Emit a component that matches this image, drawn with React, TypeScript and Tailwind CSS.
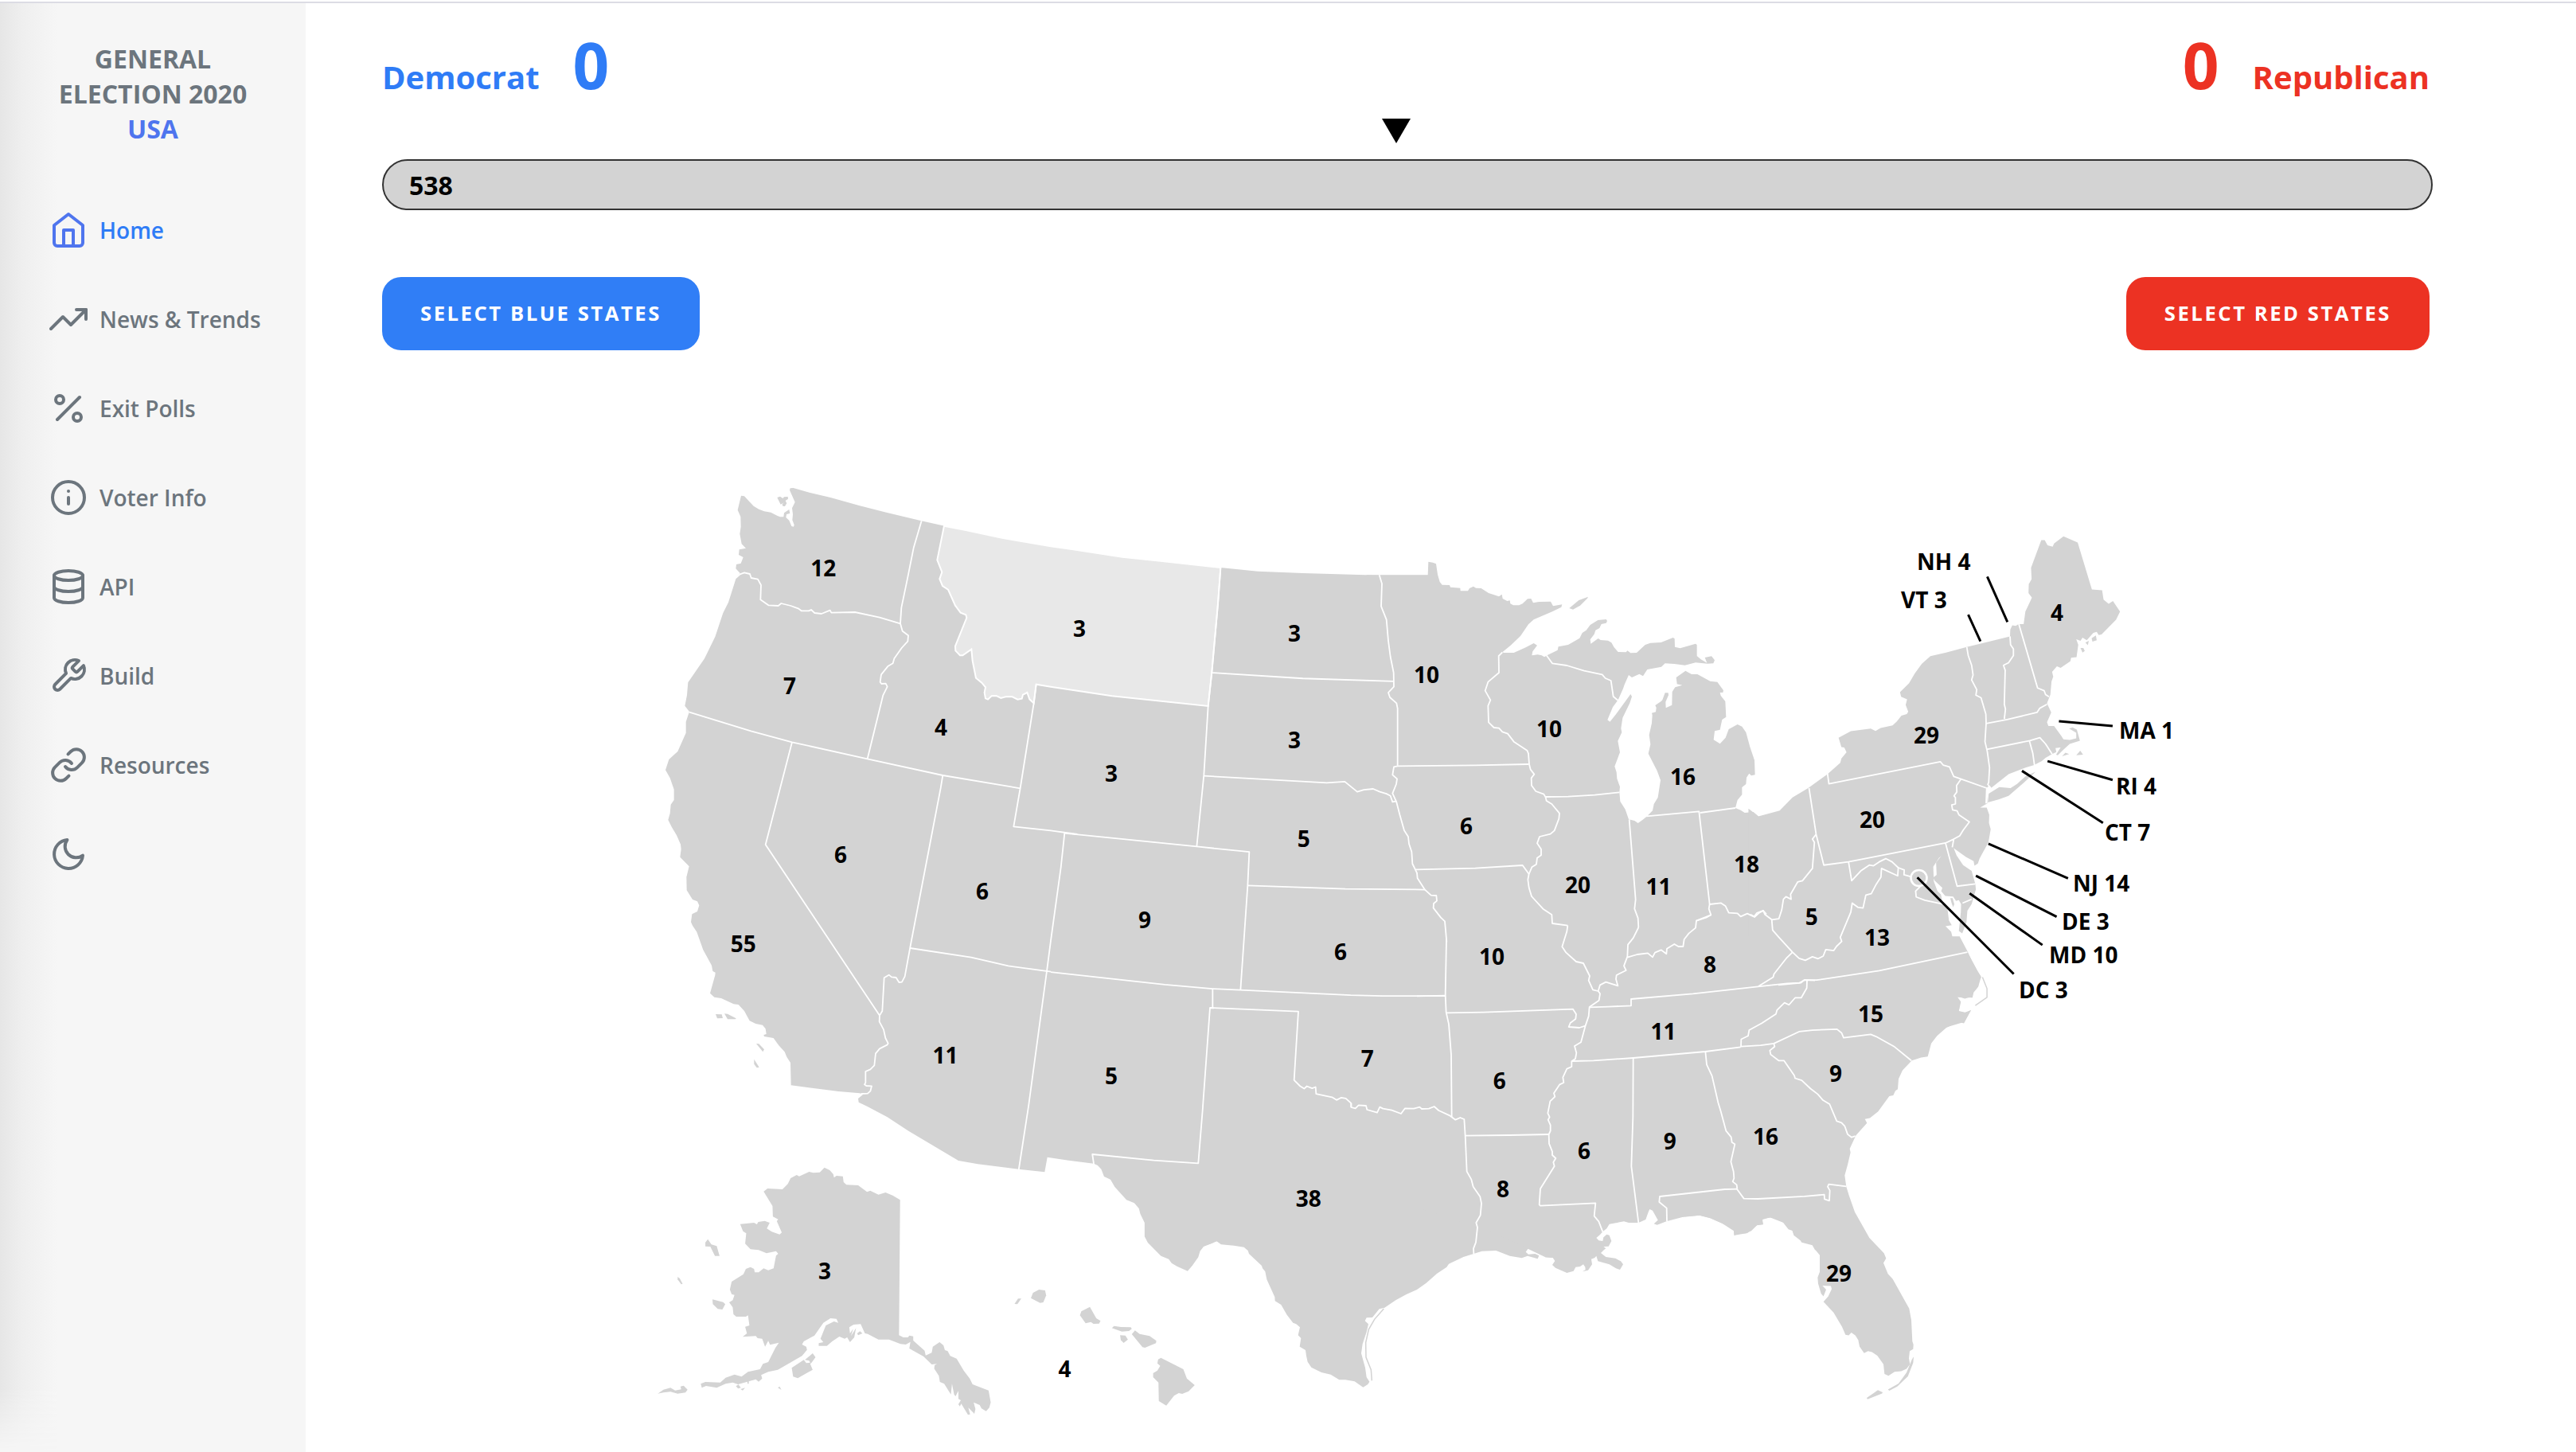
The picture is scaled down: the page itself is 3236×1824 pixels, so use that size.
import React from "react";
import { FiHome, FiTrendingUp, FiPercent, FiInfo, FiDatabase, FiTool, FiLink, FiMoon } from "react-icons/fi";
import type { IconType } from "react-icons";

const NAV: { label: string; icon: IconType; active?: boolean }[] = [
  { label: "Home", icon: FiHome, active: true },
  { label: "News & Trends", icon: FiTrendingUp },
  { label: "Exit Polls", icon: FiPercent },
  { label: "Voter Info", icon: FiInfo },
  { label: "API", icon: FiDatabase },
  { label: "Build", icon: FiTool },
  { label: "Resources", icon: FiLink },
  { label: "", icon: FiMoon },
];

// The map is drawn as overlapping sheets, each with its own coordinate scale.
const SHEET = {
  west: "translate(820 590) scale(0.333333)",
  pacific: "translate(820 1390) scale(0.446429 0.333333)",
  plains: "translate(1320 590) scale(0.333333 0.510204)",
  gulf: "translate(1520 1390) scale(0.333333)",
  lakes: "translate(1720 690) scale(0.333333)",
  northeast: "translate(2200 650) scale(0.357143 0.408163)",
  south: "translate(1780 1150) scale(0.333333)",
  southeast: "translate(2120 1180) scale(0.333333 0.382653)",
};
type SheetName = keyof typeof SHEET;

const LAND: [SheetName, string[]][] = [
  [
    "west",
    [
      "M333,98 345,100 380,137 400,149 420,157 445,161 470,174 480,178 493,178 495,163 514,150 517,165 504,168 502,180 514,191 523,213 531,215 533,208 526,190 528,168 525,145 536,122 516,77 518,70 530,69 590,86 670,105 780,136 880,161 1012,193 1100,212 1180,228 1320,258 1500,289 1580,300 1770,329 1900,343 2140,369 2280,383 2450,390 2738,398 2921,398 2921,2500 1662,2615 1567,2603 1487,2591 1477,2647 1379,2636 1225,2617 1152,2604 964,2492 884,2440 809,2400 776,2384 774,2370 793,2354 780,2350 700,2343 600,2330 521,2320 519,2235 505,2213 497,2194 475,2170 455,2142 420,2136 418,2130 428,2127 425,2107 414,2093 388,2088 365,2077 345,2040 323,2016 305,2014 258,1992 232,1988 216,1973 235,1905 236,1895 226,1890 222,1868 190,1810 166,1742 150,1718 144,1705 148,1675 168,1665 175,1642 168,1627 150,1620 128,1585 127,1535 137,1495 103,1460 107,1430 105,1412 90,1378 72,1348 58,1320 65,1295 68,1262 80,1245 80,1205 65,1162 48,1132 61,1092 74,1080 94,1062 125,992 125,950 135,920 138,912 121,890 129,850 133,802 195,712 235,630 265,540 285,500 315,406 329,390 313,373 315,357 332,353 341,330 324,321 326,301 351,296 335,280 328,242 332,215 331,177 320,152Z",
      "M469,105 480,101 490,108 495,103 509,102 510,110 500,117 505,127 498,138 490,137 488,130 495,124 482,131Z",
      "M237,2052 260,2053 264,2067 243,2068Z",
      "M270,2050 282,2051 314,2068 312,2071 282,2071Z",
      "M390,2163 400,2164 420,2185 415,2194Z",
      "M382,2222 401,2252 392,2254 382,2240Z",
    ],
  ],
  [
    "pacific",
    [
      "M1241,180 1241,215 1252,222 1262,236 1270,264 1288,275 1300,303 1333,352 1355,364 1368,384 1372,405 1384,438 1384,490 1393,513 1430,563 1452,575 1460,590 1475,602 1505,620 1518,600 1535,568 1540,545 1550,528 1568,518 1600,500 1600,0 1241,0Z",
      "M483,230 498,240 508,255 510,268 517,261 535,263 537,285 545,295 578,297 603,322 612,317 635,332 655,324 675,335 696,352 693,862 705,870 718,870 722,863 733,866 733,882 765,920 768,938 785,928 788,905 807,888 818,900 822,918 830,922 837,940 855,950 875,995 892,1025 900,1047 945,1070 951,1115 947,1135 938,1148 925,1138 920,1125 903,1115 908,1140 905,1158 888,1135 893,1160 887,1162 868,1120 864,1130 860,1122 867,1107 860,1102 860,1072 852,1092 848,1085 842,1045 839,1085 820,1045 808,1038 805,1015 792,988 793,975 800,970 785,972 762,942 722,912 725,887 712,897 697,895 665,878 635,878 605,857 597,855 585,820 565,822 553,832 555,855 564,838 558,865 572,835 567,870 555,888 547,870 540,875 525,867 505,885 490,902 467,902 467,892 480,888 472,875 487,825 510,810 522,815 517,800 500,798 480,815 455,863 425,885 420,897 432,905 434,917 420,940 352,992 325,1000 305,1012 308,1025 298,1037 290,1028 240,1047 225,1040 205,1045 180,1060 150,1053 138,1060 135,1045 148,1038 190,1040 205,1022 230,1010 250,1018 268,1000 302,990 310,970 325,963 345,910 355,890 330,898 325,883 316,905 308,875 295,873 290,865 253,868 265,855 260,830 272,825 268,787 262,792 235,792 227,783 225,757 215,738 225,730 230,710 222,707 217,690 222,660 255,632 262,612 275,605 285,612 287,625 298,625 312,610 325,617 340,610 347,562 353,555 347,545 320,553 298,541 275,538 260,517 263,478 254,470 246,443 285,438 293,444 297,435 315,431 329,438 321,460 335,472 357,482 363,475 349,432 353,425 338,415 337,375 312,320 323,309 365,312 380,292 388,270 405,258 412,263 440,246 452,250 470,248Z",
      "M450,930 458,945 447,965 443,970 450,992 408,1024 395,1018 391,985 425,955 432,967 443,965 440,958 428,955Z",
      "M155,500 165,520 180,526 188,563 175,563 162,528 148,527 148,512Z",
      "M70,642 76,648 84,668 80,670 70,652Z",
      "M168,727 198,737 204,745 196,765 183,763 169,745Z",
      "M14,1082 30,1067 50,1060 63,1070 80,1066 78,1055 87,1052 98,1067 92,1078 70,1082 50,1075 30,1078Z",
      "M234,1054 241,1048 248,1060 240,1063Z",
      "M247,1065 260,1060 253,1070Z",
      "M265,1030 270,1030 270,1045 267,1045Z",
      "M352,1060 357,1055 362,1068Z",
      "M575,855 583,847 590,855 578,862Z",
      "M1018,744 1028,724 1037,724 1026,745Z",
      "M1070,702 1087,690 1104,693 1107,712 1099,738 1090,740 1064,722Z",
      "M1206,772 1230,755 1248,798 1260,808 1256,818 1240,819 1233,812 1218,817 1202,787Z",
      "M1292,835 1298,827 1318,831 1345,832 1348,838 1340,846 1320,848Z",
      "M1315,862 1330,863 1337,878 1325,891 1317,880Z",
      "M1348,858 1357,844 1370,857 1398,865 1417,883 1416,892 1385,909 1378,907Z",
      "M1422,953 1430,947 1493,990 1503,1025 1525,1050 1508,1073 1490,1083 1480,1080 1467,1090 1445,1127 1424,1110 1423,1040 1408,1020 1408,1005 1420,995 1428,977 1420,968Z",
    ],
  ],
  [
    "gulf",
    [
      "M-20,-10 -20,524 0,518 25,508 42,520 90,524 128,530 143,543 147,555 195,600 198,610 208,622 214,652 244,718 245,733 268,747 290,785 313,815 325,820 339,832 332,862 343,873 338,905 360,918 363,940 368,962 382,983 420,1002 455,1010 487,1030 510,1030 545,1036 577,1058 595,1047 601,1037 590,1020 585,985 570,930 575,895 590,850 597,820 584,808 590,796 612,795 638,763 658,758 700,730 740,708 780,690 815,665 855,630 892,605 900,593 955,567 1025,545 1078,543 1130,563 1175,571 1197,563 1235,574 1240,562 1225,555 1200,557 1190,548 1198,537 1210,535 1218,542 1238,537 1253,542 1264,568 1292,570 1292,-10Z",
    ],
  ],
  [
    "south",
    [
      "M0,-20 1510,-20 1510,1265 1500,1260 1490,1243 1450,1232 1445,1225 1420,1205 1415,1188 1400,1183 1380,1157 1330,1138 1300,1147 1305,1165 1280,1168 1245,1197 1197,1205 1193,1185 1160,1165 1105,1140 1065,1130 1000,1137 940,1153 905,1166 893,1162 908,1148 888,1112 877,1107 873,1115 862,1146 835,1158 798,1158 780,1153 725,1163 715,1180 700,1192 690,1203 676,1215 685,1225 700,1227 703,1213 715,1202 725,1205 733,1227 722,1247 703,1248 712,1255 705,1260 693,1272 712,1287 748,1292 768,1303 777,1315 765,1335 750,1330 725,1315 682,1303 676,1283 670,1290 657,1295 660,1315 645,1337 624,1342 635,1335 634,1325 627,1315 615,1323 598,1325 590,1340 565,1347 522,1328 510,1317 520,1302 512,1290 484,1288 300,1200 0,1100Z",
    ],
  ],
  [
    "lakes",
    [
      "M-10,97 221,97 223,47 240,50 252,55 258,95 266,123 275,134 303,135 306,143 343,146 344,157 372,157 378,147 393,140 402,146 422,147 450,165 489,178 500,170 503,186 520,195 530,193 532,205 543,211 565,211 578,205 597,187 610,186 618,202 640,198 684,197 693,214 727,208 724,218 690,235 620,265 600,283 570,327 533,362 502,388 508,390 545,390 590,370 620,354 633,362 616,385 613,400 635,397 650,400 660,406 670,400 710,380 713,367 750,360 793,335 803,315 818,305 833,285 862,267 893,264 897,270 893,278 875,282 868,297 853,305 848,320 833,340 835,356 863,336 872,342 900,344 913,352 922,368 938,387 968,388 973,382 985,391 1008,390 1040,360 1060,353 1100,351 1145,333 1151,337 1152,368 1172,373 1230,356 1235,360 1235,402 1250,415 1273,428 1265,408 1290,403 1302,418 1297,430 1275,431 1230,427 1190,437 1150,432 1115,430 1101,443 1048,453 1032,478 1018,470 990,483 978,474 962,510 957,525 938,568 918,595 898,643 907,650 930,622 985,546 990,555 982,580 955,635 949,675 952,690 937,722 945,765 925,818 932,840 934,865 945,895 943,915 946,950 965,980 978,1018 1000,1023 1013,1032 1030,1020 1045,1008 1068,985 1073,960 1088,935 1098,870 1085,835 1052,770 1060,735 1055,700 1065,655 1067,625 1065,617 1080,613 1082,597 1078,588 1100,573 1105,568 1115,541 1127,541 1128,550 1117,575 1118,598 1141,587 1142,537 1153,520 1180,512 1160,508 1157,483 1192,458 1215,471 1237,471 1285,497 1312,500 1335,532 1333,540 1322,540 1325,552 1342,573 1345,632 1330,642 1325,665 1322,680 1302,685 1298,718 1322,733 1343,710 1355,678 1388,660 1405,668 1420,690 1435,745 1452,795 1454,850 1440,853 1432,845 1422,860 1420,885 1405,897 1405,925 1388,945 1380,975 1400,983 1415,993 1448,990 1468,1008 1515,997 1515,1500 -10,1500Z",
      "M754,222 790,192 825,179 822,185 795,212 768,227Z",
    ],
  ],
  [
    "northeast",
    [
      "M-10,896 25,920 100,902 145,862 200,833 268,790 313,755 317,742 335,723 327,708 317,707 307,678 350,658 420,650 437,657 455,648 497,640 512,628 528,610 547,605 552,598 543,577 548,560 527,552 523,538 555,510 575,480 600,450 630,427 685,416 758,399 910,366 911,345 918,332 930,334 940,328 958,328 964,290 987,247 975,233 976,205 986,190 984,155 1020,70 1032,70 1042,86 1060,90 1065,80 1098,58 1148,77 1198,222 1234,224 1239,253 1257,266 1272,257 1297,290 1283,315 1232,360 1222,362 1215,352 1203,355 1190,368 1180,378 1165,370 1158,380 1143,375 1150,392 1144,430 1125,432 1122,443 1088,463 1075,458 1058,475 1062,490 1056,505 1052,545 1040,572 1055,600 1040,630 1045,642 1065,642 1090,672 1098,683 1120,685 1143,680 1143,663 1118,650 1130,646 1145,653 1156,687 1120,697 1098,715 1078,732 1072,730 1088,708 1070,710 1073,722 1058,728 1035,740 1022,750 995,762 965,770 905,790 843,833 835,826 828,833 830,880 805,893 828,893 837,915 836,940 842,960 834,1000 815,1030 803,1050 797,1065 785,1072 782,1058 755,1045 712,1018 722,1040 745,1070 775,1088 788,1128 790,1145 775,1190 760,1210 757,1245 742,1280 730,1273 737,1215 738,1190 730,1178 720,1180 710,1167 682,1165 668,1150 672,1140 645,1118 640,1108 652,1100 650,1062 668,1042 660,1048 640,1075 642,1120 655,1150 667,1160 672,1180 672,1190 690,1205 695,1240 705,1255 683,1258 703,1275 708,1293 697,1308 735,1303 760,1338 808,1415 798,1445 782,1462 778,1478 722,1477 735,1490 730,1520 752,1525 773,1516 748,1557 740,1555 690,1568 600,1590 -10,1640Z",
      "M835,850 872,830 912,833 935,820 965,796 1000,783 985,795 960,815 905,857 870,868 832,877Z",
      "M1158,402 1168,402 1173,411 1165,416Z",
      "M1175,385 1187,380 1184,393Z",
      "M1197,372 1212,363 1215,378 1200,382Z",
      "M1093,735 1105,724 1118,728Z",
      "M1143,732 1157,718 1167,730Z",
      "M700,1172 708,1172 714,1190 710,1200 705,1188Z",
    ],
  ],
  [
    "southeast",
    [
      "M-10,-10 1025,-10 1055,40 1068,65 1088,100 1105,120 1106,127 1095,130 1096,152 1080,165 1070,188 1045,195 1015,187 1030,205 1022,235 1045,240 1068,233 1040,274 1020,272 975,290 940,317 918,342 905,385 880,388 845,398 810,430 795,458 792,492 783,497 775,512 760,515 718,565 687,587 668,590 676,603 635,643 628,655 611,687 614,700 603,740 592,775 598,812 608,840 630,895 685,980 740,1030 748,1047 738,1062 755,1098 773,1115 835,1212 843,1250 847,1320 851,1330 850,1345 837,1352 834,1375 838,1395 825,1410 805,1418 780,1420 757,1433 742,1427 738,1395 715,1367 695,1355 680,1352 665,1358 648,1337 643,1315 632,1300 617,1291 607,1300 595,1298 582,1272 550,1225 512,1190 530,1172 543,1148 540,1138 508,1137 522,1150 512,1172 503,1163 492,1130 490,1110 498,1092 498,1037 480,1018 472,1003 430,993 418,978 402,970 393,953 377,947 362,930 318,913 282,917 284,935 262,938 240,957 220,965 190,966 175,972 174,957 130,932 85,915 45,906 -10,910Z",
      "M852,1370 850,1390 830,1435 790,1468 760,1482 755,1478 795,1458 825,1422 845,1380Z",
      "M675,1505 700,1490 717,1480 735,1487 733,1491 678,1510Z",
    ],
  ],
];

const MONTANA =
  "M1098,212 1180,228 1320,258 1500,289 1580,300 1770,329 1900,343 2140,369 2130,505 2107,762 2093,891 1730,853 1500,818 1445,809 1436,880 1420,865 1411,840 1395,848 1391,863 1375,866 1355,856 1330,856 1312,861 1295,852 1277,853 1263,866 1254,862 1250,840 1254,820 1240,803 1218,785 1205,720 1201,677 1168,700 1158,700 1141,682 1140,665 1183,558 1180,547 1160,539 1140,512 1113,452 1092,438 1081,412 1090,386 1072,340Z";

const BORDERS: [SheetName, string[]][] = [
  [
    "west",
    [
      "M312,409 329,394 345,388 366,393 371,408 396,413 408,435 406,490 436,511 473,513 484,504 520,513 548,523 560,532 588,532 597,528 610,540 636,543 668,530 673,539 762,537 855,557 933,580",
      "M1013,193 983,295 960,410 937,520 933,580 941,608 963,625 961,647 938,672 910,712 905,730 887,740 861,772 857,800 862,807 878,806 884,818 868,850 809,1090",
      "M1445,809 1436,880 1385,1200 1360,1345 1500,1360 1600,1374",
      "M138,914 370,985 525,1027 809,1090 1093,1152 1385,1201",
      "M525,1027 425,1413 855,2057",
      "M1093,1152 1085,1200 970,1800 950,1910 939,1931 928,1932 917,1914 900,1912 890,1904 872,1915 865,2040 855,2057 854,2080 870,2110 877,2142 887,2162 883,2168 855,2182 840,2200 835,2245 820,2260 802,2268 802,2310 798,2317 805,2322 825,2323 820,2342 810,2351 785,2352",
      "M1552,1370 1538,1500 1500,1775 1485,1890 1416,2400 1379,2640",
      "M970,1803 1200,1838 1340,1870 1500,1892",
    ],
  ],
  [
    "plains",
    [
      "M640,241 630,330 607,498 593,582 577,752 550,928",
      "M50,895 550,928 748,941 742,1024 715,1281",
      "M742,1024 1110,1032 1411,1034",
      "M577,754 1040,771 1108,768 1155,793 1180,788 1215,786 1240,793 1265,798 1280,803 1288,818 1303,816",
      "M607,500 950,514 1293,521",
      "M0,1237 430,1268 610,1278 715,1281 1130,1294 1250,1296 1485,1296",
      "M610,1278 610,1325",
      "M573,1568 600,1325 933,1334 917,1503 940,1518 955,1524 965,1518 985,1523 998,1520 1000,1537 1060,1545 1077,1552 1095,1546 1112,1548 1132,1560 1132,1570",
    ],
  ],
  ["pacific", ["M1548,0 1535,214 1410,203 1237,180 1241,216"]],
  [
    "gulf",
    [
      "M532,-12 532,3 548,7 560,-5 588,-3 592,12 630,23 640,2 652,8 685,14 720,27 735,7 768,8 790,2 798,9 825,8 845,0 862,15 905,35 925,50 943,42 958,48 962,110 968,245 985,275 992,302 1018,340 1023,365 1019,410 1003,438 1008,455 1002,512 993,535 994,555",
    ],
  ],
  [
    "lakes",
    [
      "M38,97 48,130 45,215 65,265 72,345 80,405 92,465 93,518 72,540 78,558 103,580 107,600 107,815",
      "M600,810 400,814 107,817 93,820 88,850 105,865 102,885 88,920 103,953 115,1000 132,1060 147,1083 150,1110 160,1140 163,1185 180,1220 182,1240 210,1283 233,1304 253,1305 255,1325 243,1335 242,1352 270,1388 285,1402 292,1480",
      "M175,1207 400,1202 578,1191 602,1224",
      "M502,388 488,402 489,465 448,500 437,533 457,568 448,590 450,652 470,672 489,674 502,688 522,695 545,725 595,758 600,770 603,810 608,830 622,848 611,862 612,890 628,912 658,923 665,935 668,948 688,960 717,995 715,1015 698,1060 683,1073 642,1083 633,1108 648,1130 648,1153 633,1163 630,1187 613,1198 602,1224 598,1245 602,1275 612,1308 655,1355 688,1377 690,1410 748,1418",
      "M668,400 690,430 745,438 810,458 878,472 890,486 911,495 920,555 938,570",
      "M665,933 750,932 850,926 943,916",
      "M980,1018 1004,1320 1000,1355 1013,1390 1015,1425",
      "M1045,1006 1243,988 1283,1338",
      "M1247,993 1380,975",
      "M1233,1400 1288,1378 1280,1355 1283,1338 1325,1333 1343,1345 1355,1370 1388,1372 1400,1384 1425,1373 1452,1386 1470,1370 1485,1362 1497,1375",
    ],
  ],
  [
    "south",
    [
      "M111,90 107,300 110,365 120,410 129,525 131,760",
      "M0,304 107,302",
      "M568,38 565,60 547,118 562,140 600,174 627,180 651,228 647,245 663,280 683,285",
      "M835,45 815,85 795,110 793,155 780,190 788,207 752,225 750,240 757,265 712,251 690,262 683,285 690,295 686,320 650,345 647,380 635,415 618,478 594,492 601,518 597,540 583,550 583,570 565,578 550,610 553,630 538,637 516,670 520,683 502,700 493,745 500,760 494,770 503,790 503,812 497,825 498,860 510,890 510,903 523,915 514,930 518,945 465,1030 461,1090 465,1094 673,1084 668,1133 685,1153 700,1192",
      "M110,367 250,365 588,353 600,372 598,390 578,405 572,420 612,423 635,416",
      "M180,830 350,828 497,825",
      "M650,346 720,344 807,340 807,315 1040,295 1285,268 1395,256 1447,254 1460,243 1500,245",
      "M583,549 665,547 815,537 1087,513 1220,496",
      "M815,537 814,760 808,945 835,1158",
      "M1087,513 1092,562 1112,605 1135,705 1145,738 1165,812 1184,835 1187,855 1198,862 1183,928 1193,965 1195,990 1190,1003 1205,1015 1207,1031",
      "M1207,1031 1160,1032 915,1059 913,1080 941,1103 942,1153",
      "M793,158 830,147 870,142 888,157 897,140 920,130 940,145 942,125 970,108 985,117 1003,117 1007,90 1025,67 1050,47 1053,20 1090,8 1108,-2",
    ],
  ],
  [
    "northeast",
    [
      "M-3,1222 10,1228 20,1217 42,1210 48,1222 72,1238 97,1235 107,1208 113,1175 122,1167 140,1175 138,1160 163,1122 180,1118 215,1080 222,1000 215,990 228,975",
      "M203,833 228,975 255,1070 342,1060 683,1002 712,990 733,980 745,963 767,937 730,915 724,903 708,900 705,885 718,882 718,862 713,857 723,845 722,825 738,805",
      "M268,788 273,820 665,752 675,762 697,768 712,797 738,805 828,833 826,880",
      "M712,990 707,1015",
      "M683,1002 724,1135 788,1128",
      "M342,1060 353,1118 385,1088 415,1070 430,1072 450,1060 473,1050 495,1060 517,1078 515,1103 458,1080 456,1107 440,1128 422,1158 403,1162 393,1202 375,1200 355,1187 350,1215 313,1292 318,1305 300,1320 290,1333 262,1330 253,1350 235,1358 215,1352 190,1363 168,1357 145,1338 95,1290 75,1270 72,1238",
      "M517,1078 538,1085 537,1100 560,1105",
      "M583,1133 593,1137 578,1150 580,1168 610,1178 672,1190",
      "M145,1338 125,1355 80,1405 77,1415 25,1443",
      "M95,1439 168,1433 187,1424 230,1424 450,1395 760,1338",
      "M775,1175 743,1187",
      "M758,399 763,425 775,455 780,485 775,500 793,530 790,547 808,555 825,605 826,634 822,690 830,720 838,770 835,815 832,822 843,833",
      "M910,366 912,392 922,405 922,425 905,447 887,455 893,470 890,575 894,590 890,620",
      "M826,634 900,622 1005,600 1015,587 1040,575",
      "M941,328 1007,525 1030,533 1035,545 1047,552",
      "M828,714 980,687 1015,678 1035,697 1058,728",
      "M978,687 990,725 996,762",
    ],
  ],
  [
    "southeast",
    [
      "M450,135 449,160 428,192 405,192 382,215 365,208 337,232 333,245 280,275 232,298 228,317 202,328 201,352 275,348 325,342 420,303 470,298 563,295 580,307 588,323 690,312 710,319 780,353 843,398",
      "M325,342 328,352 310,365 313,378 343,398 363,398 402,447 405,456 430,463 463,490 490,508 510,528 535,541 562,597 580,602 592,613 603,640 618,650 632,646",
      "M186,820 212,851 265,852 440,844 515,838 516,853 534,858 536,825 528,812 532,804 598,811",
    ],
  ],
];

const VOTES: [number, number, string][] = [
  [1034.2, 724, "12"], [992, 872, "7"], [1182, 924, "4"], [933.7, 1196, "55"], [1056, 1083.5, "6"],
  [1234, 1129.5, "6"], [1187.5, 1336, "11"], [1036, 1607, "3"], [1337.4, 1730, "4"], [1356, 799.5, "3"],
  [1626, 805.5, "3"], [1626, 939.5, "3"], [1396, 981.5, "3"], [1637.7, 1064, "5"], [1438, 1165.5, "9"],
  [1684, 1205.5, "6"], [1396, 1361.5, "5"], [1717.7, 1340, "7"], [1643.7, 1515.5, "38"], [1888, 1503.5, "8"],
  [1990, 1455.5, "6"], [1792, 857.5, "10"], [1946, 925.5, "10"], [1842, 1047.5, "6"], [2114, 985.5, "16"],
  [1982, 1122, "20"], [2083.5, 1124, "11"], [2194, 1095.5, "18"], [1874, 1212, "10"], [1883.7, 1367.5, "6"],
  [2148, 1221.5, "8"], [2089.5, 1306, "11"], [2097.7, 1443.5, "9"], [2218, 1437.5, "16"], [2584, 779.5, "4"],
  [2420, 933.5, "29"], [2352, 1039.5, "20"], [2275.7, 1161.5, "5"], [2358, 1187.5, "13"], [2350, 1284, "15"],
  [2306, 1359, "9"], [2310, 1609.5, "29"],
];

const CALLOUTS: [number, number, string][] = [
  [2408, 715.5, "NH 4"], [2388, 763.5, "VT 3"], [2662, 928, "MA 1"], [2658, 998, "RI 4"], [2644, 1056, "CT 7"],
  [2604, 1119.5, "NJ 14"], [2590, 1167.5, "DE 3"], [2574, 1209.5, "MD 10"], [2536, 1253.5, "DC 3"],
];

const LEADERS =
  "M830,182 901,322M763,299 806,381M1082,627 1271,642M1042,750 1271,808M952,780 1237,940M834,1004 1114,1111M790,1103 1074,1229M768,1157 1024,1316M584,1108 923,1405";

function ElectoralMap() {
  return (
    <svg className="block h-[1240px] w-[2000px]" viewBox="780 560 2000 1240" role="img" aria-label="Electoral map">
      <g className="fill-[#d3d3d3]">
        {LAND.map(([sheet, shapes]) => (
          <g key={sheet} transform={SHEET[sheet]}>
            {shapes.map((d) => (
              <path key={d} d={d} />
            ))}
          </g>
        ))}
      </g>
      <path d={MONTANA} transform={SHEET.west} className="fill-[#e8e8e8] stroke-white stroke-2 [vector-effect:non-scaling-stroke]" />
      <g className="fill-none stroke-[#d3d3d3] stroke-[1.5px]">
        <path transform={SHEET.gulf} d="M655,762 620,802 598,840 587,890 588,945 607,992 610,1033" className="[vector-effect:non-scaling-stroke]" />
        <path transform={SHEET.northeast} d="M813,1415 829,1450 829,1477 788,1502" className="[vector-effect:non-scaling-stroke]" />
      </g>
      <g className="fill-none stroke-white stroke-[1.8px] [stroke-linejoin:round]">
        {BORDERS.map(([sheet, lines]) => (
          <g key={sheet} transform={SHEET[sheet]}>
            {lines.map((d) => (
              <path key={d} d={d} className="[vector-effect:non-scaling-stroke]" />
            ))}
          </g>
        ))}
      </g>
      <circle cx="2410.5" cy="1103" r="10" className="fill-[#d3d3d3] stroke-white stroke-[2.6px]" />
      <path d={LEADERS} transform={SHEET.northeast} className="fill-none stroke-black stroke-3 [vector-effect:non-scaling-stroke]" />
      <g className="fill-black text-[28px] font-bold">
        {VOTES.map(([x, y, n]) => (
          <text key={`${x}-${y}`} x={x} y={y} textAnchor="middle">
            {n}
          </text>
        ))}
        {CALLOUTS.map(([x, y, t]) => (
          <text key={t} x={x} y={y}>
            {t}
          </text>
        ))}
      </g>
    </svg>
  );
}

function Sidebar() {
  return (
    <aside className="relative flex w-96 flex-none flex-col bg-[#f6f6f6]">
      <div className="absolute inset-y-0 left-0 w-18 bg-linear-to-r from-[#e6e6e6] via-[#efefef] via-40% to-[#f6f6f6] mask-b-from-[1740px] mask-b-to-[1820px]" />
      <h1 className="relative pt-12 text-center text-[32px] leading-11 font-bold text-[#6c757d]">
        GENERAL
        <br />
        ELECTION 2020
        <br />
        <span className="text-[#4f75ee]">USA</span>
      </h1>
      <nav className="relative mt-[49px] flex flex-col">
        {NAV.map(({ label, icon: Icon, active }) => (
          <a key={label} className="flex h-28 items-center gap-[15px] pl-[62px]">
            <Icon className={active ? "size-12 text-[#4f75ee]" : "size-12 text-[#6c757d]"} />
            <span className={active ? "text-[28px] leading-10 font-semibold text-[#2f7cf6]" : "text-[28px] leading-10 font-semibold text-[#6c757d]"}>
              {label}
            </span>
          </a>
        ))}
      </nav>
    </aside>
  );
}

export default function App() {
  return (
    <div className="flex h-[1824px] w-[3236px] flex-col overflow-hidden bg-white pt-[2px] font-['Open_Sans',sans-serif]">
      <div className="h-[2px] flex-none bg-[#dcdce4]" />
      <div className="flex flex-1">
        <Sidebar />
        <main className="flex w-[2668px] flex-col pl-24">
          <header className="mt-[37px] flex h-20 items-baseline justify-between font-bold">
            <div className="flex items-baseline gap-[42px] text-[#2f7cf6]">
              <span className="text-[40px] leading-[60px]">Democrat</span>
              <span className="text-[80px] leading-20">0</span>
            </div>
            <div className="flex items-baseline gap-[42px] text-[#ec3223]">
              <span className="text-[80px] leading-20">0</span>
              <span className="text-[40px] leading-[60px]">Republican</span>
            </div>
          </header>
          <svg className="mt-[28px] ml-[1255px] block h-[32px] w-[38px]" viewBox="0 0 38 32">
            <path d="M1 0H37L19 31Z" fill="#000" />
          </svg>
          <div className="mt-[19px] flex h-16 w-[2576px] flex-none items-center rounded-full border-2 border-[#333] bg-[#d3d3d3] pl-8 text-[32px] font-bold">
            <span className="relative top-px">538</span>
          </div>
          <div className="mt-[84px] flex justify-between">
            <button className="h-[92px] rounded-3xl bg-[#307ef6] px-12 text-[25.6px] font-bold tracking-[2.56px] text-white">SELECT BLUE STATES</button>
            <button className="h-[92px] rounded-3xl bg-[#ec3223] px-12 text-[25.6px] font-bold tracking-[2.56px] text-white">SELECT RED STATES</button>
          </div>
          <div className="mt-[120px] ml-[300px]">
            <ElectoralMap />
          </div>
        </main>
      </div>
    </div>
  );
}
